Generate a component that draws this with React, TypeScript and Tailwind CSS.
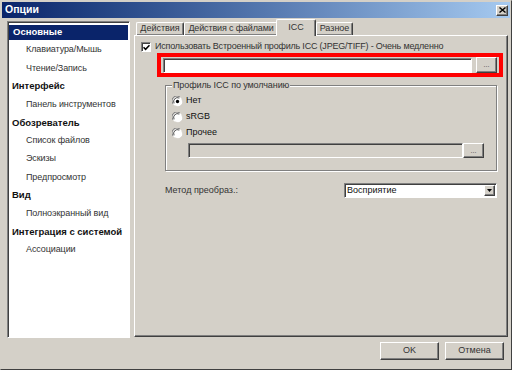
import React from 'react';

const raised =
  'border border-t-white border-l-white border-r-[#404040] border-b-[#404040] shadow-[inset_-1px_-1px_0_#808080]';
const sunken =
  'border border-t-[#808080] border-l-[#808080] border-r-white border-b-white shadow-[inset_1px_1px_0_#404040]';

const treeItems = [
  { label: 'Основные', level: 0, selected: true },
  { label: 'Клавиатура/Мышь', level: 1 },
  { label: 'Чтение/Запись', level: 1 },
  { label: 'Интерфейс', level: 0 },
  { label: 'Панель инструментов', level: 1 },
  { label: 'Обозреватель', level: 0 },
  { label: 'Список файлов', level: 1 },
  { label: 'Эскизы', level: 1 },
  { label: 'Предпросмотр', level: 1 },
  { label: 'Вид', level: 0 },
  { label: 'Полноэкранный вид', level: 1 },
  { label: 'Интеграция с системой', level: 0 },
  { label: 'Ассоциации', level: 1 },
];

function Radio({ checked, label }: { checked?: boolean; label: string }) {
  return (
    <div className="flex items-center h-[16px]">
      <svg width="11" height="11" viewBox="0 0 12 12" className="shrink-0">
        <circle cx="6" cy="6" r="5.5" fill="white" />
        <path d="M1.2 8.5 A5.2 5.2 0 0 1 8.5 1.2" stroke="#808080" strokeWidth="1.1" fill="none" />
        <path d="M2.3 8 A4.2 4.2 0 0 1 8 2.3" stroke="#404040" strokeWidth="1" fill="none" />
        <path d="M3.5 10.8 A5.2 5.2 0 0 0 10.8 3.5" stroke="#d4d0c8" strokeWidth="1" fill="none" />
        {checked && <circle cx="6" cy="6" r="1.8" fill="black" />}
      </svg>
      <span className="ml-[3px]">{label}</span>
    </div>
  );
}

function DotsButton({ h }: { h: string }) {
  return (
    <div className={`${raised} w-[21px] ${h} bg-[#d4d0c8] flex items-center justify-center shrink-0`}>
      <span className="text-[7px] leading-none -mt-[1px] text-[#404040]">...</span>
    </div>
  );
}

export default function App() {
  return (
    <div className="w-[512px] h-[370px] bg-[#d4d0c8] border border-t-[#d4d0c8] border-l-[#d4d0c8] border-r-[#404040] border-b-[#404040] p-[1px] flex flex-col font-['Liberation_Sans',Arial,sans-serif] text-[9px] text-[#111] whitespace-nowrap overflow-hidden">
      {/* title bar */}
      <div className="h-[16px] bg-gradient-to-r from-[#0a246a] to-[#a6caf0] flex items-center justify-between pl-[3px] pr-[2px]">
        <span className="text-white font-bold text-[10.5px]">Опции</span>
        <div className={`${raised} w-[12px] h-[11px] bg-[#d4d0c8] flex items-center justify-center`}>
          <svg width="7" height="6" viewBox="0 0 7 6">
            <path d="M0.5 0.5 L6.5 5.5 M6.5 0.5 L0.5 5.5" stroke="black" strokeWidth="1.4" />
          </svg>
        </div>
      </div>

      <div className="flex pl-[5px]">
        {/* tree */}
        <div className={`${sunken} mt-[3px] w-[123px] h-[317px] bg-white flex flex-col pt-[1px] px-[1px]`}>
          {treeItems.map((it) => (
            <div key={it.label} className="h-[18.17px] flex items-center">
              {it.selected ? (
                <div className="w-full h-[15px] bg-[#0a246a] text-white font-bold text-[9.5px] flex items-center pl-[4px]">
                  {it.label}
                </div>
              ) : (
                <span
                  className={
                    it.level === 0 ? 'font-bold text-[9.5px] pl-[3px]' : 'pl-[17px] text-[#333] tracking-[-0.1px]'
                  }
                >
                  {it.label}
                </span>
              )}
            </div>
          ))}
        </div>

        {/* tabs */}
        <div className="ml-[4px] w-[374px] flex flex-col mt-[1px]">
          <div className="h-[16px] flex items-end pl-[2px] text-[#333]">
            <div className={`${raised} border-b-0 h-[13px] w-[48px] flex items-center justify-center rounded-t-[2px]`}>
              Действия
            </div>
            <div
              className={`${raised} border-b-0 h-[13px] w-[94px] flex items-center justify-center rounded-t-[2px] tracking-[-0.15px]`}
            >
              Действия с файлами
            </div>
            <div className="relative z-10 -ml-[2px] -mb-px h-[17px] w-[40px] bg-[#d4d0c8] border border-b-0 border-t-white border-l-white border-r-[#404040] shadow-[inset_-1px_0_0_#808080] rounded-t-[2px] flex justify-center pt-[1px]">
              ICC
            </div>
            <div className={`${raised} border-b-0 h-[13px] w-[37px] flex items-center justify-center rounded-t-[2px]`}>
              Разное
            </div>
          </div>

          <div className={`${raised} h-[302px] flex flex-col`}>
            {/* checkbox */}
            <div className="flex items-center ml-[6px] mt-[6px] h-[10px]">
              <div className={`${sunken} w-[10px] h-[10px] bg-white flex items-center justify-center shrink-0`}>
                <svg width="7" height="7" viewBox="0 0 7 7">
                  <path d="M0.5 3.2 L2.6 5.3 L6.5 1.2" stroke="black" strokeWidth="1.6" fill="none" />
                </svg>
              </div>
              <span className="ml-[4px] tracking-[-0.2px] text-[#333]">
                Использовать Встроенный профиль ICC (JPEG/TIFF) - Очень медленно
              </span>
            </div>

            {/* highlighted path row */}
            <div className="ml-[22px] mt-[1px] w-[346px] h-[24px] border-4 border-[#ff0000] flex items-center pl-[2px]">
              <div className={`${sunken} w-[309px] h-[15px] bg-white`} />
              <div className="ml-[4px]">
                <DotsButton h="h-[16px]" />
              </div>
            </div>

            {/* group box */}
            <div className="ml-[30px] mt-[8px] w-[332px] h-[86px] border border-[#808080] shadow-[1px_1px_0_white,inset_1px_1px_0_white] flex flex-col pl-[6px]">
              <span className="-mt-[7px] bg-[#d4d0c8] w-fit px-[1px] leading-[12px] text-[#333] tracking-[-0.1px]">
                Профиль ICC по умолчанию
              </span>
              <div className="mt-[2px] flex flex-col">
                <Radio checked label="Нет" />
                <Radio label="sRGB" />
                <Radio label="Прочее" />
              </div>
              <div className="flex mt-[2px] ml-[16px]">
                <div className={`${sunken} w-[275px] h-[15px] bg-[#d4d0c8]`} />
                <DotsButton h="h-[15px]" />
              </div>
            </div>

            {/* method */}
            <div className="ml-[30px] mt-[12px] w-[332px] h-[15px] flex items-center justify-between">
              <span className="text-[#333]">Метод преобраз.:</span>
              <div className={`${sunken} w-[153px] h-[15px] bg-white flex items-center justify-between`}>
                <span className="pl-[2px]">Восприятие</span>
                <div className={`${raised} w-[11px] h-[11px] mr-[1px] bg-[#d4d0c8] flex items-center justify-center`}>
                  <svg width="5" height="3" viewBox="0 0 5 3">
                    <path d="M0 0 L5 0 L2.5 3 Z" fill="black" />
                  </svg>
                </div>
              </div>
            </div>
          </div>
        </div>
      </div>

      {/* buttons */}
      <div className="flex justify-end gap-[6px] pr-[6px] mt-[4px] text-[#333]">
        <div className={`${raised} w-[59px] h-[18px] flex items-center justify-center`}>OK</div>
        <div className={`${raised} w-[59px] h-[18px] flex items-center justify-center`}>Отмена</div>
      </div>
    </div>
  );
}
